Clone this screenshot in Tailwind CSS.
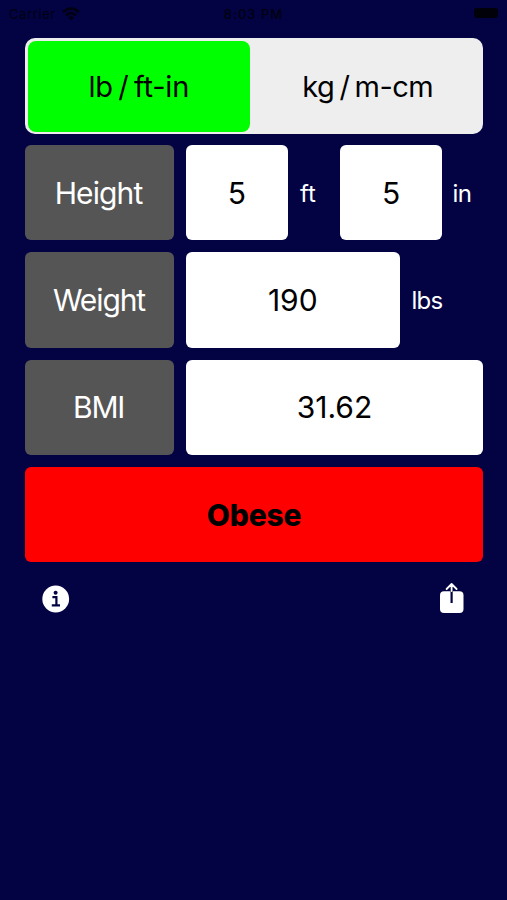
<!DOCTYPE html>
<html lang="en">
<head>
<meta charset="utf-8">
<title>BMI Calculator</title>
<script src="https://cdn.jsdelivr.net/npm/@tailwindcss/browser@4"></script>
</head>
<body class="bg-[#030344] font-['Inter',sans-serif]">
<div class="w-[507px] h-[900px] overflow-hidden flex flex-col">
  <header class="h-[38px] shrink-0 pt-[5px] pl-[9px] pr-[9px] grid grid-cols-3 items-start text-[13px] leading-[18px] text-[#01010f]">
    <div class="flex items-center gap-[6px]">
      <span class="tracking-[0.6px]">Carrier</span>
      <svg class="w-[18px] h-[14px]" viewBox="0 0 18 14" fill="none" stroke="currentColor" stroke-width="2.4"><path d="M1 5.2Q9-2 17 5.2M4 8.3Q9 4 14 8.3"/><path d="M6.3 10.4Q9 8.2 11.7 10.4L9 13.3Z" fill="currentColor" stroke="none"/></svg>
    </div>
    <div class="text-center font-medium tracking-[1px] whitespace-nowrap">8:03 PM</div>
    <div class="flex justify-end pt-[3px]"><div class="w-[24px] h-[10px] rounded-[3px] bg-[#01010a]"></div></div>
  </header>
  <main class="pl-[25px] w-[483px] flex flex-col gap-3 text-[30px] leading-9">
    <div class="h-[96px] -mb-[1px] p-[2.5px] rounded-[10px] bg-[#eeeeee] flex text-black">
      <div class="w-[222.5px] rounded-[8px] bg-[#00ff00] flex items-center justify-center"><span class="pt-[2px] text-[29px] tracking-[-0.2px] [word-spacing:-2.5px]">lb / ft-in</span></div>
      <div class="flex-1 flex items-center justify-center pl-[5px]"><span class="pt-[2px] text-[29px] tracking-[-0.5px] [word-spacing:-2.5px]">kg / m-cm</span></div>
    </div>
    <div class="h-[95.3px] flex">
      <div class="w-[149px] pr-[2px] rounded-[6px] bg-[#555555] text-white flex items-center justify-center"><span class="tracking-[-0.9px]">Height</span></div>
      <div class="ml-3 w-[101.5px] rounded-[6px] bg-white flex items-center justify-center">5</div>
      <div class="w-[52.5px] pl-[12.5px] pt-[2px] text-[24px] text-white flex items-center">ft</div>
      <div class="w-[102px] rounded-[6px] bg-white flex items-center justify-center">5</div>
      <div class="pl-[10.5px] pt-[2px] text-[24px] tracking-[-0.6px] text-white flex items-center">in</div>
    </div>
    <div class="h-[95.3px] flex">
      <div class="w-[149px] pr-px rounded-[6px] bg-[#555555] text-white flex items-center justify-center"><span class="tracking-[-1.1px]">Weight</span></div>
      <div class="ml-3 w-[213.5px] rounded-[6px] bg-white flex items-center justify-center"><span>190</span></div>
      <div class="pl-[12px] pt-[2px] text-[24px] tracking-[-0.7px] text-white flex items-center">lbs</div>
    </div>
    <div class="h-[95.3px] flex">
      <div class="w-[149px] pr-[2px] rounded-[6px] bg-[#555555] text-white flex items-center justify-center"><span class="tracking-[-1.3px]">BMI</span></div>
      <div class="ml-3 flex-1 rounded-[6px] bg-white flex items-center justify-center"><span>31.62</span></div>
    </div>
    <div class="h-[95.3px] rounded-[6px] bg-[#ff0000] flex items-center justify-center font-extrabold"><span class="tracking-[-0.2px]">Obese</span></div>
  </main>
  <footer class="mt-[20px] w-[507px] pl-[42px] pr-[43px] flex justify-between">
    <svg class="w-[28px] h-[32px]" viewBox="0 0 28 32"><circle cx="13.7" cy="17" r="13.4" fill="#fff"/><circle cx="13.6" cy="10.8" r="2" fill="#030344"/><path d="M10.4 15.2H14.4V23.4M9.8 23.4H18" fill="none" stroke="#030344" stroke-width="2.2"/></svg>
    <svg class="w-[25px] h-[32px]" viewBox="0 0 25 32"><rect x="1" y="9.3" width="23.5" height="21.7" rx="4" fill="#fff"/><path d="M12.6 9V21" stroke="#030344" stroke-width="2.2"/><path d="M12.6 9V2.4M7.6 7L12.6 2L17.6 7" fill="none" stroke="#fff" stroke-width="1.8" stroke-linecap="round" stroke-linejoin="round"/></svg>
  </footer>
</div>
</body>
</html>
